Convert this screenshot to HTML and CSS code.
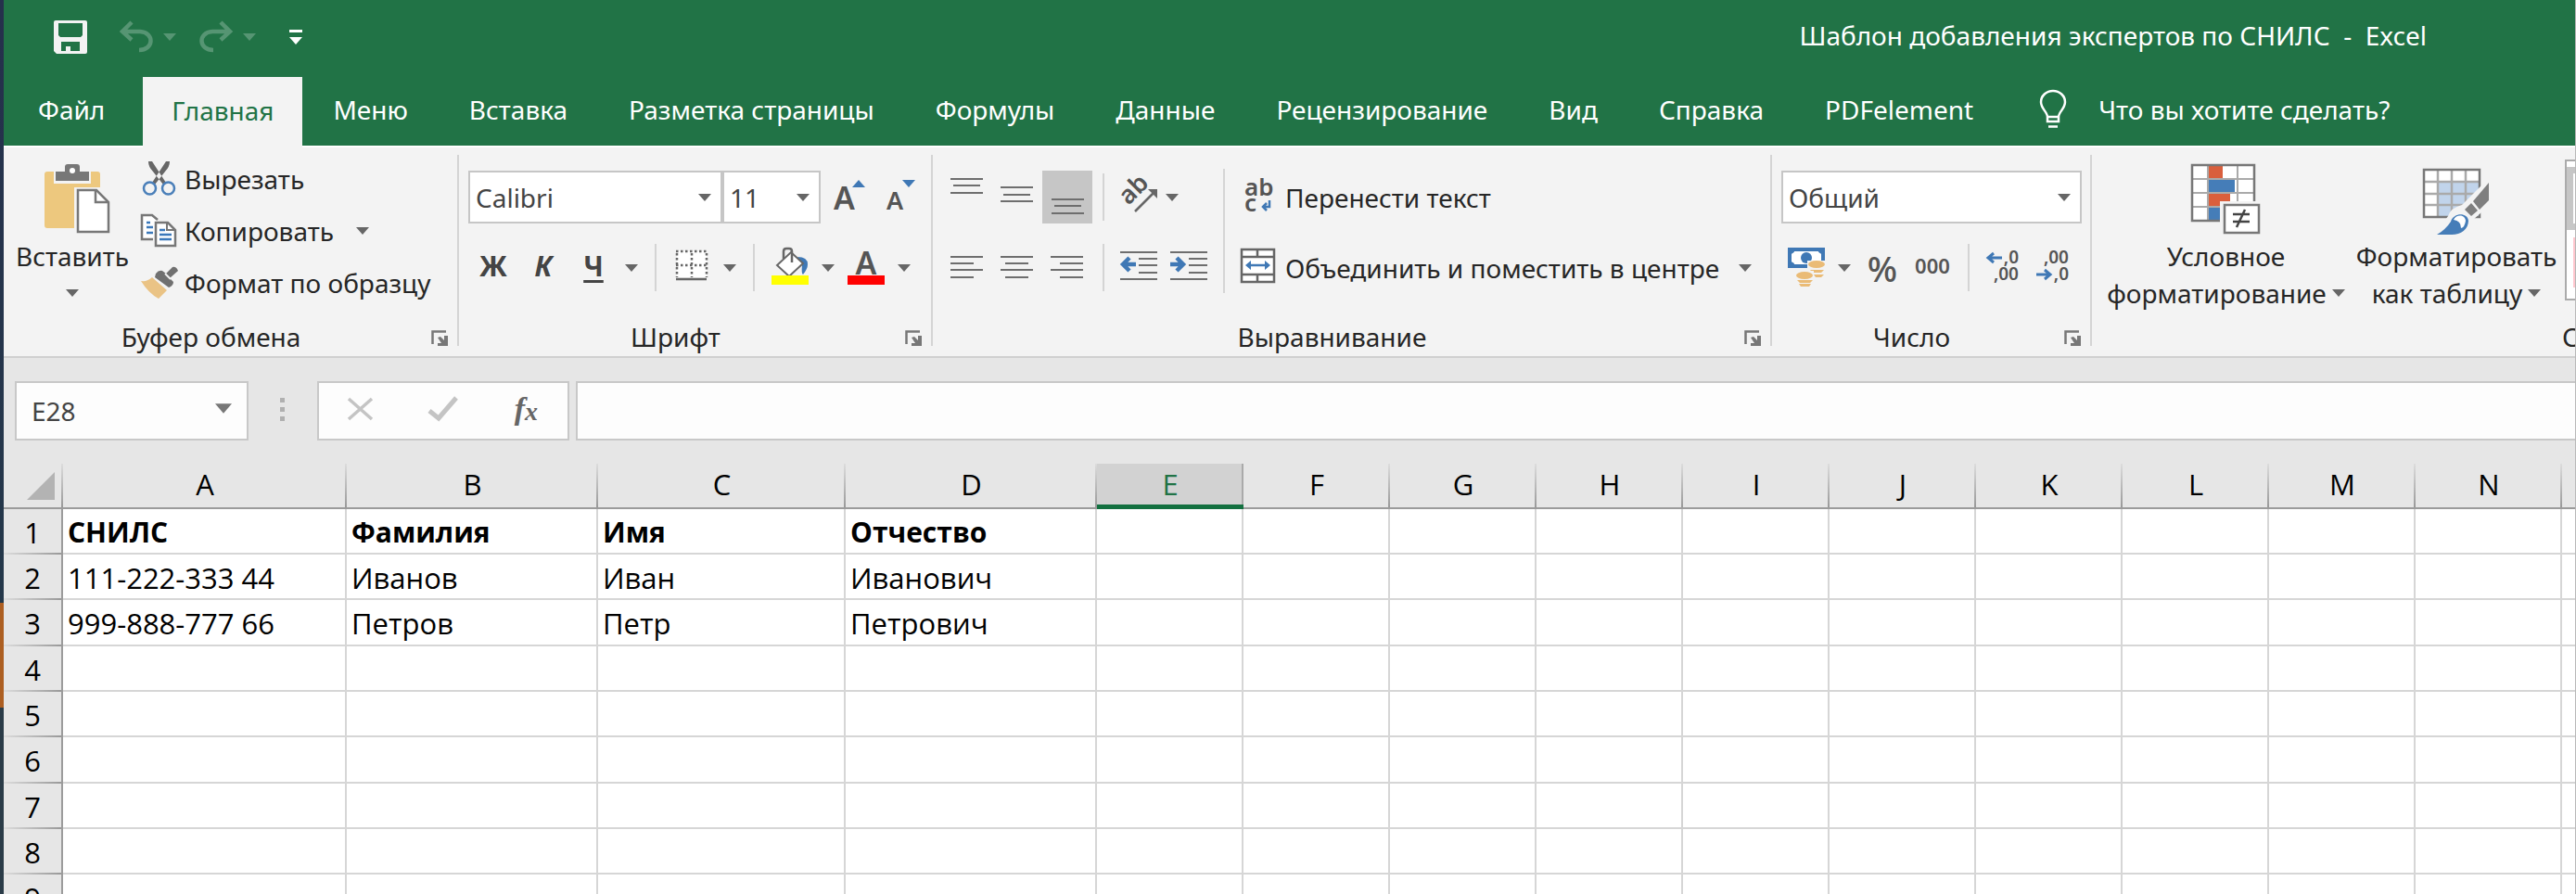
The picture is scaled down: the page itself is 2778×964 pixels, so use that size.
FILE: index.html
```html
<!DOCTYPE html>
<html lang="ru">
<head>
<meta charset="utf-8">
<title>Шаблон добавления экспертов по СНИЛС - Excel</title>
<link rel="stylesheet" href="styles.css">
</head>
<body>
<svg class="defs" aria-hidden="true">
  <symbol id="caret" viewBox="0 0 14 8"><path d="M0 0h14L7 8z"/></symbol>
  <symbol id="launcher" viewBox="0 0 18 17"><path d="M1.500 15V1.500H16" fill="none" stroke="#777" stroke-width="2.500"/><path d="M7 8l3-1 4 4V6h4v11H7v-3h4z" fill="#777"/></symbol>
</svg>
<div class="app">
  <header class="titlebar">
    <div class="quick">
      <button class="qa-save" aria-label="Сохранить"><svg width="36" height="36" viewBox="0 0 36 36"><path d="M2 0h32q2 0 2 2v32q0 2-2 2H3l-3-3V2q0-2 2-2z" fill="#f3f3f3"/><path d="M5 3h26v13l-2 2H7l-2-2z" fill="#217346"/><path d="M8 23h20v10H18v-5h-5v5H8z" fill="#217346"/></svg></button>
      <button class="qa-undo" aria-label="Отменить"><svg width="36" height="34" viewBox="0 0 36 34"><path d="M13 1L3 11l10 9M4 11h18c16 1 15 20-1 20" fill="none" stroke="#569573" stroke-width="4.500"/></svg></button>
      <button class="qa-caret" aria-label="Список отмены"><svg class="caret faded"><use href="#caret"/></svg></button>
      <button class="qa-redo" aria-label="Вернуть"><svg width="36" height="34" viewBox="0 0 36 34"><path d="M23 1l10 10-10 9M32 11H14C-2 12-1 31 15 31" fill="none" stroke="#569573" stroke-width="4.500"/></svg></button>
      <button class="qa-caret" aria-label="Список возврата"><svg class="caret faded"><use href="#caret"/></svg></button>
      <button class="qa-more" aria-label="Настройка панели"><svg width="14" height="16" viewBox="0 0 14 16" fill="#fff"><path d="M0 0h14v3H0zM0 8h14l-7 8z"/></svg></button>
    </div>
    <h1 class="title">Шаблон добавления экспертов по СНИЛС&nbsp; -&nbsp; Excel</h1>
  </header>

  <nav class="tabs">
    <button class="tab file">Файл</button>
    <button class="tab active">Главная</button>
    <button class="tab">Меню</button>
    <button class="tab">Вставка</button>
    <button class="tab">Разметка страницы</button>
    <button class="tab">Формулы</button>
    <button class="tab">Данные</button>
    <button class="tab">Рецензирование</button>
    <button class="tab">Вид</button>
    <button class="tab">Справка</button>
    <button class="tab">PDFelement</button>
    <button class="tell"><svg width="30" height="42" viewBox="0 0 30 42" fill="none" stroke="#fff" stroke-width="2.500"><path d="M9 34v-5c0-5-7-9-7-16a13 12 0 0 1 26 0c0 7-7 11-7 16v5zM9 29h12M10 39.500h10"/></svg>Что вы хотите сделать?</button>
  </nav>

  <section class="ribbon">
    <div class="group clipboard">
      <div class="body">
        <button class="big paste">
          <svg width="80" height="79" viewBox="-10 0 80 79"><path d="M3 8h54q3 0 3 3v58H3q-3 0-3-3V11q0-3 3-3z" fill="#edc87e"/><path d="M10 5h40v16H10z" fill="#f3f3f3"/><path d="M12 8h10V3q0-3 3-3h10q3 0 3 3v5h10v10H12z" fill="#777"/><circle cx="30" cy="7" r="3" fill="#fff"/><path d="M32 25h38v50H32z" fill="#f3f3f3"/><path d="M36 28h20l13 13v32H36z" fill="#fff" stroke="#777" stroke-width="2.500"/><path d="M55 28v13h13" fill="none" stroke="#777" stroke-width="2.500"/></svg>
          <span>Вставить</span>
          <span><svg class="caret"><use href="#caret"/></svg></span>
        </button>
        <div class="list">
          <button class="row"><svg width="40" height="38" viewBox="0 0 40 38"><path d="M8 0q0 6 5 11l11 14 3-2L12 0zM31 0q0 6-5 11L15 25l-3-2L27 0z" fill="#666"/><circle cx="9.500" cy="29" r="6.500" fill="#f3f3f3" stroke="#4a7fb9" stroke-width="2.500"/><circle cx="29.500" cy="29" r="6.500" fill="#f3f3f3" stroke="#4a7fb9" stroke-width="2.500"/></svg>Вырезать</button>
          <button class="row"><svg width="40" height="36" viewBox="0 0 40 36"><path d="M13 27H1V1h11l6 5" fill="#fff" stroke="#777" stroke-width="2.500"/><path d="M6 9h4M6 14h7M6 20h7" stroke="#3a78ba" stroke-width="2.500"/><path d="M16 9h13l8 8v17H16z" fill="#fff" stroke="#777" stroke-width="2.500"/><path d="M28 9v8h9" fill="none" stroke="#777" stroke-width="2"/><path d="M20 17h6M20 22h13M20 27h13" stroke="#3a78ba" stroke-width="2.500"/></svg>Копировать<svg class="caret copy-caret"><use href="#caret"/></svg></button>
          <button class="row"><svg width="40" height="36" viewBox="0 0 40 36"><path d="M0 16q7 1 12-4l16 14-9 9Q8 29 0 16z" fill="#eac385"/><path d="M16 8q3-4 7-3l4 3 7-7q4-1 6 4l-9 8 4 4q0 4-5 6L15 12z" fill="#707070"/><path d="M26 8l6 6" stroke="#f3f3f3" stroke-width="2"/></svg>Формат по образцу</button>
        </div>
      </div>
      <div class="label">Буфер обмена</div>
      <button class="launch" aria-label="Параметры буфера обмена"><svg><use href="#launcher"/></svg></button>
    </div>

    <div class="group font">
      <div class="body rows">
        <div class="line">
          <label class="combo name"><select aria-label="Шрифт"><option>Calibri</option></select><svg class="caret"><use href="#caret"/></svg></label>
          <label class="combo size"><select aria-label="Размер шрифта"><option>11</option></select><svg class="caret"><use href="#caret"/></svg></label>
          <button class="tool grow" aria-label="Увеличить шрифт"><svg width="54" height="57"><text x="10" y="42" font-size="34">A</text><path d="M30 18h14l-7-8z" fill="#3f78b5"/></svg></button>
          <button class="tool" aria-label="Уменьшить шрифт"><svg width="54" height="57"><text x="13" y="42" font-size="27">A</text><path d="M30 10h14l-7 8z" fill="#3f78b5"/></svg></button>
        </div>
        <div class="line">
          <button class="tool letter">Ж</button>
          <button class="tool letter italic">К</button>
          <button class="tool letter under">Ч</button>
          <button class="drop" aria-label="Подчёркивание"><svg class="caret"><use href="#caret"/></svg></button>
          <i class="sep"></i>
          <button class="tool" aria-label="Границы"><svg width="54" height="51" fill="none" stroke="#666" stroke-width="2.500"><path d="M11 8h32v28H11z" fill="#fff" stroke="none"/><path d="M10 8h34M10 23h34M11 10v26M27 10v26M43 10v26" stroke-dasharray="2.500 2.500"/><path d="M10 38h33"/></svg></button>
          <button class="drop" aria-label="Виды границ"><svg class="caret"><use href="#caret"/></svg></button>
          <i class="sep"></i>
          <button class="tool" aria-label="Цвет заливки"><svg width="54" height="51"><path d="M35 14q11 0 11 8 0 5-5 11-2-1-1-10z" fill="#3f78b5"/><path d="M28 9l13 12-15 14-13-12z" fill="#fff" stroke="#666" stroke-width="2"/><path d="M20 16V8q0-3 3-3h3q3 0 3 3v12" fill="none" stroke="#666" stroke-width="2.500"/><path d="M7 34h40v10H7z" fill="#ff0"/></svg></button>
          <button class="drop" aria-label="Цвета заливки"><svg class="caret"><use href="#caret"/></svg></button>
          <button class="tool" aria-label="Цвет текста"><svg width="54" height="51"><text x="27" y="33" font-size="34" text-anchor="middle">A</text><path d="M7 34h40v10H7z" fill="#f00"/></svg></button>
          <button class="drop" aria-label="Цвета текста"><svg class="caret"><use href="#caret"/></svg></button>
        </div>
      </div>
      <div class="label">Шрифт</div>
      <button class="launch" aria-label="Параметры шрифта"><svg><use href="#launcher"/></svg></button>
    </div>

    <div class="group align">
      <div class="body">
        <div class="rows">
          <div class="line">
            <button class="tool" aria-label="По верхнему краю"><svg class="bars" width="54" height="57"><path d="M9 9h35M12 16h29M9 24h35"/></svg></button>
            <button class="tool" aria-label="По середине"><svg class="bars" width="54" height="57"><path d="M9 18h35M12 26h29M9 33h35"/></svg></button>
            <button class="tool on" aria-label="По нижнему краю"><svg class="bars" width="54" height="57"><path d="M10 31h35M13 38h29M10 46h35"/></svg></button>
            <i class="sep"></i>
            <button class="tool" aria-label="Ориентация"><svg width="54" height="57"><text x="15" y="38" font-size="27" transform="rotate(-45 15 38)">ab</text><path d="M22 44l21-21" stroke="#666" stroke-width="2.500"/><path d="M36 20h10v10z" fill="#666"/></svg></button>
            <button class="drop narrow" aria-label="Виды ориентации"><svg class="caret"><use href="#caret"/></svg></button>
          </div>
          <div class="line">
            <button class="tool" aria-label="По левому краю"><svg class="bars" width="54" height="51"><path d="M9 14h35M9 21h25M9 28h35M9 36h25"/></svg></button>
            <button class="tool" aria-label="По центру"><svg class="bars" width="54" height="51"><path d="M9 14h35M14 21h25M9 28h35M14 36h25"/></svg></button>
            <button class="tool" aria-label="По правому краю"><svg class="bars" width="54" height="51"><path d="M9 14h35M19 21h25M9 28h35M19 36h25"/></svg></button>
            <i class="sep"></i>
            <button class="tool" aria-label="Уменьшить отступ"><svg class="bars" width="54" height="51"><path d="M6 9h40M26 16h20M26 23h20M26 31h20M6 38h40"/><path d="M23 22H10M16 15l-7 7 7 7" stroke="#3f78b5" stroke-width="4.500"/></svg></button>
            <button class="tool" aria-label="Увеличить отступ"><svg class="bars" width="54" height="51"><path d="M6 9h40M26 16h20M26 23h20M26 31h20M6 38h40"/><path d="M6 22h13M13 15l7 7-7 7" stroke="#3f78b5" stroke-width="4.500"/></svg></button>
          </div>
        </div>
        <i class="divider"></i>
        <div class="rows">
          <button class="wide"><svg width="38" height="57"><text x="4" y="27" font-size="26">ab</text><text x="4" y="44" font-size="26">c</text><path d="M31 32v7h-7M28 35l-4 4 4 4" fill="none" stroke="#3f78b5" stroke-width="2.500"/></svg>Перенести текст</button>
          <button class="wide"><svg width="38" height="51"><path d="M1 6h35v35H1zM1 14h35M1 33h35M18 6v8M18 33v8" fill="#fff" stroke="#666" stroke-width="2.500"/><path d="M7 23h23" stroke="#3f78b5" stroke-width="2.500"/><path d="M5 23l6-5v10zM32 23l-6-5v10z" fill="#3f78b5"/></svg>Объединить и поместить в центре<svg class="caret merge-caret"><use href="#caret"/></svg></button>
        </div>
      </div>
      <div class="label">Выравнивание</div>
      <button class="launch" aria-label="Параметры выравнивания"><svg><use href="#launcher"/></svg></button>
    </div>

    <div class="group number">
      <div class="body rows">
        <div class="line"><label class="combo format"><select aria-label="Числовой формат"><option>Общий</option></select><svg class="caret"><use href="#caret"/></svg></label></div>
        <div class="line">
          <button class="tool" aria-label="Финансовый формат"><svg width="54" height="51"><path d="M9 6h36v18H9z" fill="#fff" stroke="#3f78b5" stroke-width="4"/><path d="M7 4h8q0 7-6 7zM47 4h-8q0 7 6 7zM7 26h8q0-7-6-7z" fill="#3f78b5"/><circle cx="27" cy="15" r="6" fill="#3f78b5"/><path d="M28 18h21v24H28z" fill="#f3f3f3"/><g fill="#eabb76"><ellipse cx="38" cy="22" rx="9" ry="4"/><path d="M31 28h15l-3 3H34zM35 33h11l-3 3h-6z"/></g><path d="M15 29h20v17H15z" fill="#f3f3f3"/><g fill="#eabb76"><ellipse cx="25" cy="34" rx="9" ry="4"/><path d="M17 39h17l-3 3H20zM19 43h13l-2 3h-9z"/></g></svg></button>
          <button class="drop" aria-label="Валюты"><svg class="caret"><use href="#caret"/></svg></button>
          <button class="tool percent">%</button>
          <button class="tool thousands">000</button>
          <i class="sep"></i>
          <button class="tool" aria-label="Увеличить разрядность"><svg width="54" height="51"><text x="42" y="21" font-size="19" text-anchor="end">,0</text><text x="42" y="39" font-size="19" text-anchor="end">,00</text><path d="M24 15H10M15 10l-6 5 6 5" fill="none" stroke="#3f78b5" stroke-width="3"/></svg></button>
          <button class="tool" aria-label="Уменьшить разрядность"><svg width="54" height="51"><text x="42" y="21" font-size="19" text-anchor="end">,00</text><text x="42" y="39" font-size="19" text-anchor="end">,0</text><path d="M7 33h14M16 28l6 5-6 5" fill="none" stroke="#3f78b5" stroke-width="3"/></svg></button>
        </div>
      </div>
      <div class="label">Число</div>
      <button class="launch" aria-label="Параметры числа"><svg><use href="#launcher"/></svg></button>
    </div>

    <div class="group styles">
      <div class="body">
        <button class="big cond">
          <svg width="76" height="79" viewBox="0 0 76 79"><path d="M1 1h67v60H1z" fill="#fff"/><path d="M1 16h67M1 31h67M1 46h67M18 1v60M50 1v60" stroke="#aaa" stroke-width="2"/><path d="M19 2h15v13H19zM19 32h23v13H19z" fill="#d95f3d"/><path d="M19 17h28v13H19zM19 47h12v13H19z" fill="#457db8"/><path d="M1 1h67v60H1z" fill="none" stroke="#777" stroke-width="2.500"/><path d="M31 40h45v39H31z" fill="#f3f3f3"/><path d="M36 44h37v30H36z" fill="#fff" stroke="#777" stroke-width="2.500"/><path d="M45 54h18M45 62h18M58 49L49 68" stroke="#444" stroke-width="2.500"/></svg>
          <span>Условное</span>
          <span>форматирование<svg class="caret"><use href="#caret"/></svg></span>
        </button>
        <button class="big table-style">
          <svg width="72" height="79" viewBox="0 0 72 79"><path d="M1 6h60v51H1z" fill="#fff"/><path d="M16 19h45v38H16z" fill="#c1d4eb"/><path d="M1 19h60M1 32h60M1 44h60M16 6v51M31 6v51M46 6v51" stroke="#aaa" stroke-width="2.500"/><path d="M1 6h60v51H1z" fill="none" stroke="#777" stroke-width="2.500"/><path d="M72 14L42 44q-12 3-15 12L12 77h32l10-17 18-16z" fill="#f3f3f3"/><path d="M71 20v19L61 49l-7-9z" fill="#7f7f7f"/><path d="M52 42l7 8-7 6-7-7z" fill="#7f7f7f"/><circle cx="40" cy="63" r="9" fill="#fff"/><path d="M15 76q9-5 15-14c3-10 18-10 19-1 0 9-8 15-18 15z" fill="#457db8"/><path d="M33 60c3-6 12-6 13 1q-1 7-5 8 0-8-8-9z" fill="#fff"/></svg>
          <span>Форматировать</span>
          <span>как таблицу<svg class="caret"><use href="#caret"/></svg></span>
        </button>
        <div class="gallery"><div class="swatch picked"></div><div class="swatch bad"></div></div>
      </div>
      <div class="label">Стили</div>
    </div>
  </section>

  <section class="formula-bar">
    <div class="namebox"><input aria-label="Имя ячейки" value="E28"><svg class="name-caret"><use href="#caret"/></svg></div>
    <i class="dots"></i>
    <div class="fx-box">
      <button aria-label="Отмена"><svg width="30" height="26" fill="none" stroke="#c4c4c4" stroke-width="3.500"><path d="M2 2l25 22M27 2L2 24"/></svg></button>
      <button aria-label="Ввод"><svg width="34" height="28" fill="none" stroke="#c4c4c4" stroke-width="5"><path d="M2 16l10 8L31 2"/></svg></button>
      <button class="fx" aria-label="Вставить функцию">f<small>x</small></button>
    </div>
    <input class="formula" aria-label="Строка формул">
  </section>

  <main class="sheet">
    <table>
      <colgroup><col class="c-head"><col class="c-a"><col class="c-b"><col class="c-c"><col class="c-b"><col class="c-std" span="11"></colgroup>
      <thead>
        <tr><th class="corner"><svg width="30" height="30"><path d="M30 0v30H0z" fill="#b3b3b3"/></svg></th><th>A</th><th>B</th><th>C</th><th>D</th><th class="current">E</th><th>F</th><th>G</th><th>H</th><th>I</th><th>J</th><th>K</th><th>L</th><th>M</th><th>N</th><th>O</th></tr>
      </thead>
      <tbody>
        <tr class="bold"><th>1</th><td>СНИЛС</td><td>Фамилия</td><td>Имя</td><td>Отчество</td><td></td><td></td><td></td><td></td><td></td><td></td><td></td><td></td><td></td><td></td><td></td></tr>
        <tr><th>2</th><td>111-222-333 44</td><td>Иванов</td><td>Иван</td><td>Иванович</td><td></td><td></td><td></td><td></td><td></td><td></td><td></td><td></td><td></td><td></td><td></td></tr>
        <tr><th>3</th><td>999-888-777 66</td><td>Петров</td><td>Петр</td><td>Петрович</td><td></td><td></td><td></td><td></td><td></td><td></td><td></td><td></td><td></td><td></td><td></td></tr>
        <tr><th>4</th><td></td><td></td><td></td><td></td><td></td><td></td><td></td><td></td><td></td><td></td><td></td><td></td><td></td><td></td><td></td></tr>
        <tr><th>5</th><td></td><td></td><td></td><td></td><td></td><td></td><td></td><td></td><td></td><td></td><td></td><td></td><td></td><td></td><td></td></tr>
        <tr><th>6</th><td></td><td></td><td></td><td></td><td></td><td></td><td></td><td></td><td></td><td></td><td></td><td></td><td></td><td></td><td></td></tr>
        <tr><th>7</th><td></td><td></td><td></td><td></td><td></td><td></td><td></td><td></td><td></td><td></td><td></td><td></td><td></td><td></td><td></td></tr>
        <tr><th>8</th><td></td><td></td><td></td><td></td><td></td><td></td><td></td><td></td><td></td><td></td><td></td><td></td><td></td><td></td><td></td></tr>
        <tr><th>9</th><td></td><td></td><td></td><td></td><td></td><td></td><td></td><td></td><td></td><td></td><td></td><td></td><td></td><td></td><td></td></tr>
      </tbody>
    </table>
  </main>
</div>
</body>
</html>
```
FILE: styles.css
```css
* { box-sizing: border-box; }
body {
  margin: 0;
  overflow: hidden;
  font: 28px/40px "Noto Sans", "Open Sans", sans-serif;
  color: #262626;
  background: linear-gradient(#25304c, #24384a 650px, #ad5f22 650px, #ad5f22 763px, #2b3c48 763px);
}
button, input, select { font: inherit; color: inherit; }
button { border: 0; padding: 0; background: none; }
svg { display: block; flex: none; overflow: visible; }
svg text { fill: #555; font-weight: 600; }
.defs { position: absolute; width: 0; height: 0; }
.caret { width: 14px; height: 8px; fill: #666; }
.caret.faded { fill: #569573; }

.app {
  display: flex;
  flex-direction: column;
  height: 100vh;
  margin-left: 4px;
  border-right: 1px solid #b8b8b8;
  overflow: hidden;
}

/* Title bar */
.titlebar {
  display: flex;
  justify-content: space-between;
  align-items: center;
  padding: 0 160px 7px 54px;
  height: 83px;
  background: #217346;
  color: #fff;
}
.quick { display: flex; align-items: center; padding-top: 4px; }
.qa-undo { margin-left: 35px; }
.qa-redo { margin-left: 25px; }
.qa-caret { margin-left: 11px; }
.qa-more { margin-left: 36px; }
.title { margin: 0; font-size: 28px; font-weight: 400; white-space: nowrap; }

/* Tabs */
.tabs { display: flex; height: 74px; padding-left: 4px; background: #217346; color: #fff; flex: none; }
.tab { padding: 0 33px 4px; white-space: nowrap; }
.tab.file { margin-right: 8px; }
.tab.active { padding: 0 31px 4px; background: #f3f3f3; color: #217346; height: 76px; z-index: 1; }
.tell { display: flex; align-items: center; gap: 34px; padding: 0 0 4px 38px; white-space: nowrap; }

/* Ribbon */
.ribbon {
  display: flex;
  flex: none;
  overflow: hidden;
  background: #f3f3f3;
  border-top: 2px solid #fff;
  border-bottom: 2px solid #d0d0d0;
}
.group {
  display: grid;
  grid-template: minmax(184px, auto) 22px / 1fr 42px;
  flex: none;
  margin: 8px 0 11px;
  border-right: 2px solid #d4d4d4;
}
.clipboard { width: 491px; }
.font { width: 511px; }
.align { width: 905px; }
.number { width: 345px; }
.styles { width: 1140px; }
.body { grid-column: 1 / -1; display: flex; padding-left: 10px; }
.label { line-height: 24px; text-align: center; }
.launch { justify-self: start; align-self: end; margin-left: 14px; }
.launch svg { width: 18px; height: 17px; }

.big { display: flex; flex-direction: column; align-items: center; padding-top: 10px; white-space: nowrap; }
.big span { display: flex; align-items: center; gap: 6px; height: 40px; }
.clipboard .body { padding-left: 16px; gap: 16px; }
.paste { width: 116px; }
.list { display: flex; flex-direction: column; margin-top: -2px; }
.row { display: flex; align-items: center; gap: 7px; height: 56px; white-space: nowrap; }
.copy-caret { margin-left: 17px; }

.rows { display: grid; grid-template-rows: 57px 51px; row-gap: 22px; align-content: start; padding-top: 17px; }
.line { display: flex; align-items: center; }
.tool { display: grid; place-items: center; width: 54px; height: 100%; }
.tool.on { background: #c6c6c6; }
.grow { margin-left: 4px; }
.drop { display: grid; place-items: center; width: 28px; height: 51px; }
.drop.narrow { width: 16px; }
.sep { width: 2px; height: 51px; margin: 0 11px; background: #d4d4d4; }
.divider { width: 2px; height: 134px; margin: 15px 17px 0 9px; background: #d4d4d4; }
.bars { fill: none; stroke: #6e6e6e; stroke-width: 2px; }
.letter { padding-bottom: 3px; font-size: 30px; font-weight: 700; color: #444; }
.italic { font-style: italic; }
.under { text-decoration: underline 3px; text-underline-offset: 4px; }
.percent { font-size: 38px; font-weight: 500; color: #555; }
.thousands { font-size: 22px; font-weight: 600; color: #555; padding-bottom: 6px; }
.wide { display: flex; align-items: center; gap: 10px; white-space: nowrap; }
.merge-caret { margin-left: 11px; }

.combo { display: grid; align-items: center; height: 57px; }
.combo select {
  grid-area: 1 / 1;
  height: 100%;
  padding: 0 6px;
  appearance: none;
  border: 2px solid #c6c6c6;
  border-radius: 0;
  background: #fff;
  color: #444;
}
.combo .caret { grid-area: 1 / 1; justify-self: end; margin-right: 12px; pointer-events: none; }
.name { width: 274px; }
.size { width: 106px; }
.format { width: 324px; }

.styles .body { padding-left: 16px; }
.cond { width: 257px; }
.table-style { width: 214px; margin: 0 10px 0 13px; }
.gallery { flex: 1; height: 152px; margin-top: 5px; padding-top: 6px; border: 2px solid #ababab; background: #fff; }
.swatch { height: 54px; margin: 8px 7px; background: #ffc7ce; }
.swatch.picked { height: 68px; margin: 0; border: 7px solid #c6c6c6; background: #fff; }

/* Formula bar */
.formula-bar { display: flex; flex: none; align-items: stretch; height: 114px; padding: 25px 0 25px 12px; background: #e6e6e6; }
.namebox, .fx-box, .formula { border: 2px solid #c8c8c8; border-radius: 0; background: #fdfdfd; }
.namebox { display: flex; align-items: center; width: 252px; padding: 0 16px; }
.namebox input { flex: 1; min-width: 0; padding: 0; border: 0; background: none; color: #444; }
.name-caret { width: 18px; height: 11px; margin-bottom: 6px; fill: #777; }
.dots { width: 5px; height: 25px; margin: 18px 35px 0 34px; background: repeating-linear-gradient(#b0b0b0 0 5px, transparent 5px 10px); }
.fx-box { display: grid; grid-template-columns: repeat(3, 1fr); width: 272px; margin-right: 7px; }
.fx-box button { display: grid; place-items: center; padding-bottom: 4px; }
.fx-box .fx { display: flex; align-items: center; justify-content: center; font: italic 700 34px/40px "Liberation Serif", serif; color: #666; }
.fx small { font-size: 28px; padding-top: 6px; }
.formula { flex: 1; min-width: 0; border-right: 0; padding: 0 12px; }

/* Sheet */
.sheet { flex: 1; min-height: 0; overflow: hidden; background: #fff; font: 31px/40px "Open Sans", "Noto Sans", sans-serif; color: #000; }
table { table-layout: fixed; width: 2917px; border-collapse: separate; border-spacing: 0; }
.c-head { width: 64px; }
.c-a { width: 306px; }
.c-b { width: 271px; }
.c-c { width: 267px; }
.c-std { width: 158px; }
th { padding: 0; font-weight: 400; }
td { padding: 2px 0 0 5px; border-right: 2px solid #d6d6d6; border-bottom: 2px solid #d6d6d6; white-space: nowrap; }
tr { height: 49px; }
tbody tr:nth-child(3n) { height: 50px; }
thead th {
  padding-bottom: 3px;
  border-bottom: 2px solid #9b9b9b;
  background: linear-gradient(#dcdcdc, #999) right / 2px 100% no-repeat #e6e6e6;
}
thead .current { padding: 0; border-bottom: 5px solid #137040; background: linear-gradient(#aaa, #aaa) right / 2px 100% no-repeat #d2d2d2; color: #217346; }
thead .corner { padding: 0 8px 0 25px; }
tbody th { border-right: 2px solid #9b9b9b; background: linear-gradient(90deg, #dcdcdc, #999) bottom / 100% 2px no-repeat #e6e6e6; }
.bold td { font-weight: 700; font-size: 30px; }
```
